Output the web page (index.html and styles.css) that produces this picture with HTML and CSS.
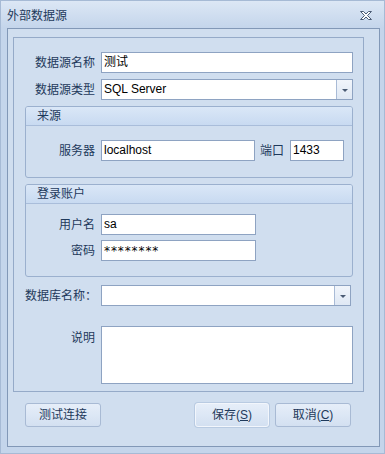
FILE: index.html
```html
<!DOCTYPE html>
<html lang="zh-CN">
<head>
    <meta charset="UTF-8">
    <title>外部数据源</title>
    <link rel="stylesheet" href="styles.css">
</head>
<body>
    <div class="window">
        <div class="titlebar">
            <span class="caption">外部数据源</span>
            <svg class="close" width="12" height="10" viewBox="0 0 12 10">
                <polygon points="0.5,0.5 3.5,0.5 6,3 8.5,0.5 11.5,0.5 7.5,4.5 11.5,8.5 8.5,8.5 6,6 3.5,8.5 0.5,8.5 4.5,4.5" fill="#ffffff" stroke="#4a5b74" stroke-width="1"/>
            </svg>
        </div>

        <div class="frame">
            <div class="panel">
                <div class="row">
                    <div class="label">数据源名称</div>
                    <div class="field grow">测试</div>
                </div>
                <div class="row type-row">
                    <div class="label">数据源类型</div>
                    <div class="combo grow">
                        <span class="value">SQL Server</span>
                        <span class="drop"><span class="arrow"></span></span>
                    </div>
                </div>

                <div class="group source">
                    <div class="group-head">来源</div>
                    <div class="group-body">
                        <div class="row">
                            <div class="label">服务器</div>
                            <div class="field server">localhost</div>
                            <div class="port-label">端口</div>
                            <div class="field port">1433</div>
                        </div>
                    </div>
                </div>

                <div class="group account">
                    <div class="group-head">登录账户</div>
                    <div class="group-body">
                        <div class="row">
                            <div class="label">用户名</div>
                            <div class="field user">sa</div>
                        </div>
                        <div class="row pass-row">
                            <div class="label">密码</div>
                            <div class="field user pass">********</div>
                        </div>
                    </div>
                </div>

                <div class="row db-row">
                    <div class="label">数据库名称：</div>
                    <div class="combo db">
                        <span class="value"></span>
                        <span class="drop"><span class="arrow"></span></span>
                    </div>
                </div>

                <div class="row desc-row">
                    <div class="label top">说明</div>
                    <div class="field grow memo"></div>
                </div>
            </div>

            <div class="buttons">
                <div class="btn">测试连接</div>
                <div class="btn save">保存(<u>S</u>)</div>
                <div class="btn cancel">取消(<u>C</u>)</div>
            </div>
        </div>
    </div>
</body>
</html>
```

FILE: styles.css
```css
* {
    box-sizing: border-box;
}
body {
    margin: 0;
    font-family: "Liberation Sans", "Noto Sans CJK SC", sans-serif;
    font-size: 12px;
    color: #1e395b;
}
.window {
    width: 385px;
    height: 454px;
    background: #c4d5eb;
    border: 1px solid #a6bad5;
}
.titlebar {
    height: 27px;
    display: flex;
    align-items: center;
    justify-content: space-between;
    padding: 2px 12px 0 6px;
    background: linear-gradient(#dce7f5, #c4d5eb);
}
.caption {
    font-size: 12px;
    line-height: 16px;
}
.close {
    display: block;
}

.frame {
    margin-left: 6px;
    width: 373px;
    height: 419px;
    border: 1px solid #8298b7;
    background: #d0deef;
    padding: 8px 0 0 5px;
}
.panel {
    width: 351px;
    height: 355px;
    border: 1px solid #95aac8;
    padding: 14px 10px 0 11px;
}

.row {
    display: flex;
    align-items: center;
    height: 21px;
}
.label {
    width: 70px;
    margin-right: 6px;
    text-align: right;
    white-space: nowrap;
    line-height: 16px;
}
.group .label {
    width: 69px;
}
.grow {
    flex: 1;
}
.field {
    height: 21px;
    background: #fff;
    border: 1px solid #8ea3c2;
    padding-left: 2px;
    line-height: 19px;
    color: #000;
    white-space: nowrap;
    overflow: hidden;
}
.combo {
    height: 21px;
    display: flex;
    background: #fff;
    border: 1px solid #8ea3c2;
    color: #000;
}
.combo .value {
    flex: 1;
    padding-left: 2px;
    line-height: 19px;
}
.drop {
    width: 16px;
    border-left: 1px solid #a9bbd6;
    background: linear-gradient(#f1f5fb, #dfe8f4);
    display: flex;
    align-items: center;
    justify-content: center;
}
.arrow {
    width: 0;
    height: 0;
    border-left: 3px solid transparent;
    border-right: 3px solid transparent;
    border-top: 3px solid #4a5b74;
    margin-top: 1px;
}

.type-row {
    margin-top: 6px;
}

.group {
    margin-top: 6px;
    border: 1px solid #9bb0ce;
    border-radius: 3px;
}
.source {
    height: 72px;
}
.account {
    height: 93px;
}
.group-head {
    height: 19px;
    padding-left: 11px;
    line-height: 18px;
    background: linear-gradient(#dae7f7, #c8daf1);
    border-bottom: 1px solid #a9bdda;
    border-radius: 2px 2px 0 0;
}
.source .group-body {
    padding-top: 14px;
}
.account .group-body {
    padding-top: 10px;
}
.server {
    width: 154px;
}
.port-label {
    margin-left: 5px;
    width: 24px;
    line-height: 16px;
}
.port {
    margin-left: 6px;
    width: 54px;
}
.user {
    width: 155px;
}
.pass-row {
    margin-top: 5px;
}
.pass {
    font-family: "DejaVu Sans", sans-serif;
    font-size: 12px;
    letter-spacing: 0.9px;
    line-height: 21px;
}

.db-row {
    margin-top: 8px;
}
.db {
    width: 250px;
}
.desc-row {
    margin-top: 20px;
    height: 58px;
    align-items: flex-start;
}
.label.top {
    padding-top: 4px;
}
.memo {
    height: 58px;
}

.buttons {
    display: flex;
    width: 351px;
    margin-top: 11px;
    padding: 0 13px 0 12px;
}
.btn {
    width: 76px;
    height: 24px;
    border: 1px solid #a8bad4;
    border-radius: 3px;
    background: linear-gradient(#e6eef9, #d3e0f1);
    text-align: center;
    line-height: 22px;
}
.btn.save {
    width: 74px;
    margin-left: auto;
    border-color: #f2f6fc;
    box-shadow: 0 0 0 1px #b9cbe2;
}
.btn.cancel {
    margin-left: 6px;
}
```
